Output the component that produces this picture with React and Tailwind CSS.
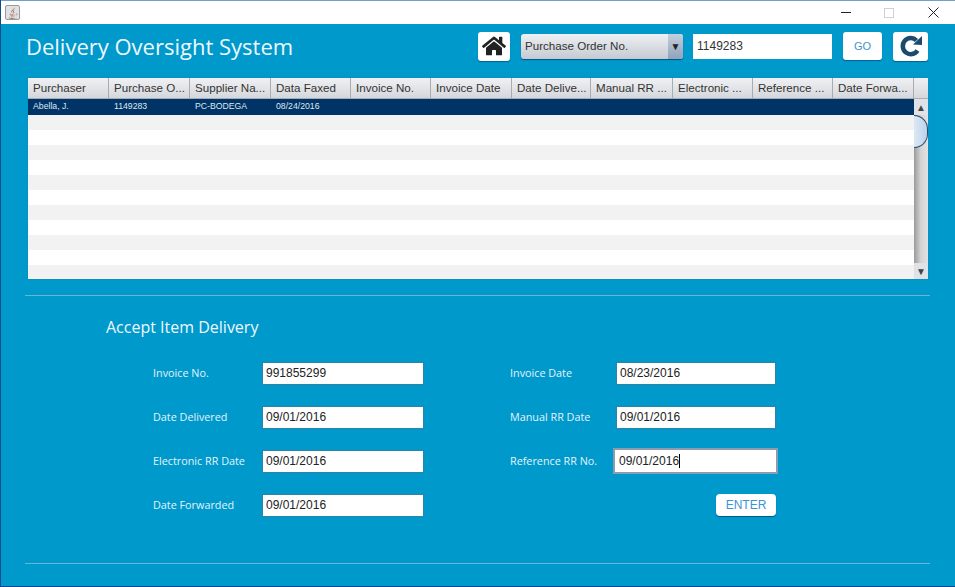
import React from 'react';
import { FaHome, FaJava } from 'react-icons/fa';

const columns = [
  ['Purchaser', 'w-[81px]'],
  ['Purchase O...', 'w-[81px]'],
  ['Supplier Na...', 'w-[81px]'],
  ['Data Faxed', 'w-[80px]'],
  ['Invoice No.', 'w-[80px]'],
  ['Invoice Date', 'w-[81px]'],
  ['Date Delive...', 'w-[79px]'],
  ['Manual RR ...', 'w-[82px]'],
  ['Electronic ...', 'w-[80px]'],
  ['Reference ...', 'w-[80px]'],
  ['Date Forwa...', 'w-[81px]'],
];
const selected = ['Abella, J.', '1149283', 'PC-BODEGA', '08/24/2016'];
const rows = ['bg-[#f2f2f2]', 'bg-white', 'bg-[#f2f2f2]', 'bg-white', 'bg-[#f2f2f2]', 'bg-white', 'bg-[#f2f2f2]', 'bg-white', 'bg-[#f2f2f2]', 'bg-white', 'bg-[#f2f2f2]'];

const uiFont = "font-['Open_Sans',sans-serif]";
const tableFont = "font-['Liberation_Sans',sans-serif]";

const Field = ({ label, value, focused, wide }) => (
  <div className="flex items-center h-[22px]">
    <span className={`${uiFont} w-[110px] text-[10.8px] text-[#e3f3fa] shrink-0`}>{label}</span>
    <div className={`${tableFont} flex items-center bg-white text-[12px] text-[#222] shadow-[0_0_1px_1px_rgba(90,110,130,0.45)] ${focused ? 'w-[161px] h-[22px] -ml-[2px] pl-[4px] outline-2 outline-[#8d9bb0]' : wide ? 'w-[160px] h-[21px] pl-[3px]' : 'w-[158px] h-[21px] pl-[3px]'}`}>
      {value}
      {focused && <span className="w-px h-[14px] bg-black" />}
    </div>
  </div>
);

export default function App() {
  return (
    <div className="w-[955px] h-[587px] flex flex-col overflow-hidden bg-[#0099cc] border-l border-l-[#0f4c8f] border-b border-b-[#0f4c8f]">
      <div className="h-[24px] shrink-0 flex items-center bg-white border-t border-t-[#6f9fd0] pl-[4px]">
        <div className="w-[15px] h-[15px] flex items-center justify-center rounded-[2px] border border-[#9a9a9a] bg-[#dfe3e8]">
          <FaJava size={12} className="text-[#a2552a]" />
        </div>
        <div className="ml-auto flex items-center">
          <span className="w-[10px] h-px bg-[#222] mr-[33px]" />
          <span className="w-[10px] h-[10px] border border-[#d0d0d0] mr-[34px]" />
          <svg width="11" height="11" viewBox="0 0 11 11" className="mr-[16px]">
            <path d="M0.5 0.5 L10.5 10.5 M10.5 0.5 L0.5 10.5" stroke="#222" strokeWidth="1" />
          </svg>
        </div>
      </div>

      <div className="flex items-center h-[38px] mt-[3px] pl-[25px] pr-[27px]">
        <h1 className={`${uiFont} text-[22px] text-[#eef8fc] font-normal`}>Delivery Oversight System</h1>
        <button className="ml-auto w-[32px] h-[29px] flex items-center justify-center bg-white rounded-[3px] shadow-[0_1px_1px_rgba(0,40,80,0.5)]">
          <FaHome size={24} className="text-[#222]" />
        </button>
        <div className={`${tableFont} ml-[11px] w-[162px] h-[25px] flex items-center justify-between rounded-[3px] bg-gradient-to-b from-[#eef0f3] to-[#c5cad2] text-[11.6px] text-[#333] pl-[4px] shadow-[0_1px_1px_rgba(0,40,80,0.6)]`}>
          Purchase Order No.
          <span className="w-[15px] h-full flex items-center justify-center rounded-r-[3px] bg-gradient-to-b from-[#c5cfdc] to-[#8fa3bb] text-[10px] text-[#222]">▼</span>
        </div>
        <div className={`${tableFont} ml-[10px] w-[139px] h-[25px] flex items-center bg-white text-[12px] text-[#333] pl-[4px]`}>1149283</div>
        <button className={`${tableFont} ml-[11px] w-[39px] h-[28px] bg-white rounded-[3px] text-[11px] text-[#3a94d6] shadow-[0_1px_1px_rgba(0,40,80,0.5)]`}>GO</button>
        <button className="ml-[11px] w-[35px] h-[29px] flex items-center justify-center bg-white rounded-[3px] shadow-[0_1px_1px_rgba(0,40,80,0.5)]">
          <svg width="24" height="24" viewBox="0 0 24 24">
            <path d="M18.5 16.5 A8 8 0 1 1 17.5 6.5" fill="none" stroke="#1c4a6e" strokeWidth="4.5" />
            <path d="M14 10.5 L23 11 L23 2 Z" fill="#1c4a6e" />
          </svg>
        </button>
      </div>

      <div className={`${tableFont} mt-[13px] ml-[27px] w-[900px] h-[201px] flex flex-col shrink-0 bg-white shadow-[0_0_1px_rgba(60,80,100,0.6)]`}>
        <div className="flex h-[21px] shrink-0 bg-gradient-to-b from-[#f0f1f3] to-[#d4d7dc] border-b border-b-[#a8adb5]">
          {columns.map(([c, w]) => (
            <div key={c} className={`${w} shrink-0 pl-[5px] flex items-center text-[11.6px] text-[#333] border-r border-r-[#a8adb5] whitespace-nowrap overflow-hidden`}>{c}</div>
          ))}
        </div>
        <div className="flex flex-1 min-h-0">
          <div className="flex-1 flex flex-col">
            <div className="h-[16px] shrink-0 flex bg-[#003366] text-[8.7px] text-[#dfe8f2]">
              {selected.map((s) => (
                <div key={s} className="w-[81px] pl-[5px] flex items-center">{s}</div>
              ))}
            </div>
            {rows.map((r, i) => (
              <div key={i} className={`h-[15px] shrink-0 ${r} last:h-[14px]`} />
            ))}
          </div>
          <div className="w-[14px] shrink-0 flex flex-col bg-gradient-to-r from-[#9a9a9a] via-[#d5d5d5] to-[#e2e2e2]">
            <div className="h-[16px] shrink-0 flex items-center justify-center bg-[#dfe3e8] text-[10px] text-[#444]">▲</div>
            <div className="h-[33px] shrink-0 rounded-r-[14px] border-y border-r border-[#2c4a6b] bg-gradient-to-r from-[#dce8f4] to-[#bcd3ea]" />
            <div className="flex-1" />
            <div className="h-[16px] shrink-0 flex items-center justify-center bg-[#dfe3e8] text-[10px] text-[#444]">▼</div>
          </div>
        </div>
      </div>

      <div className="mt-[16px] ml-[24px] w-[905px] h-px shrink-0 bg-[#6fb5d3]" />

      <h2 className={`${uiFont} mt-[20px] ml-[105px] text-[16px] leading-[22px] text-[#eef8fc] font-normal`}>Accept Item Delivery</h2>

      <div className="mt-[24px] ml-[152px] flex gap-[87px]">
        <div className="flex flex-col gap-[22px]">
          <Field label="Invoice No." value="991855299" wide />
          <Field label="Date Delivered" value="09/01/2016" wide />
          <Field label="Electronic RR Date" value="09/01/2016" wide />
          <Field label="Date Forwarded" value="09/01/2016" wide />
        </div>
        <div className="flex flex-col gap-[22px]">
          <div className="[&>div>span:first-child]:w-[107px] flex flex-col gap-[22px]">
            <Field label="Invoice Date" value="08/23/2016" />
            <Field label="Manual RR Date" value="09/01/2016" />
            <Field label="Reference RR No." value="09/01/2016" focused />
          </div>
          <button className={`${tableFont} self-end w-[60px] h-[22px] bg-white rounded-[4px] text-[12px] text-[#3a94d6] shadow-[0_1px_1px_rgba(0,40,80,0.6)]`}>ENTER</button>
        </div>
      </div>

      <div className="mt-[47px] ml-[24px] w-[905px] h-px shrink-0 bg-[#6fb5d3]" />
    </div>
  );
}
